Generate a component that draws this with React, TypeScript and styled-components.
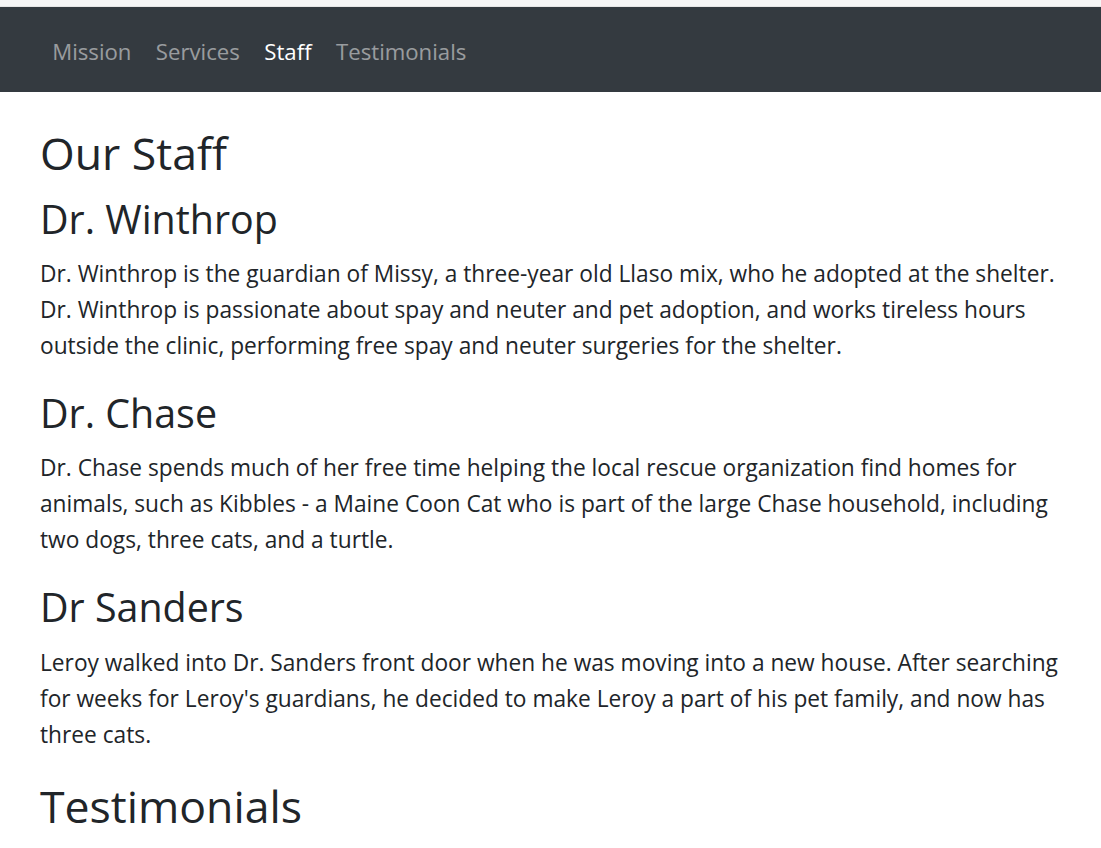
import React from "react";
import styled, { createGlobalStyle } from "styled-components";

const GlobalStyle = createGlobalStyle`
  html, body { margin: 0; padding: 0; background: #ffffff; }
  body {
    font-family: "Open Sans", "Noto Sans", Arial, sans-serif;
    color: #212529;
  }
  * { box-sizing: border-box; }
`;

const Page = styled.div`
  display: flex;
  flex-direction: column;
  width: 100%;
  min-height: 848px;
  overflow: hidden;
`;

const ChromeStrip = styled.div`
  height: 7px;
  background: #f6f6f6;
  border-bottom: 1px solid #e6e6e6;
`;

const NavBar = styled.nav`
  display: flex;
  align-items: center;
  height: 85px;
  padding: 4px 40px 0;
  background: #343a40;
`;

const NavList = styled.ul`
  display: flex;
  list-style: none;
  margin: 0;
  padding: 0;
`;

const NavLink = styled.a<{ $active?: boolean }>`
  display: block;
  padding: 0 12.2px;
  font-size: 22.2px;
  line-height: 36px;
  text-decoration: none;
  color: ${(p) => (p.$active ? "#ffffff" : "rgba(255, 255, 255, 0.5)")};
  cursor: pointer;
`;

const Content = styled.main`
  display: flex;
  flex-direction: column;
  padding: 32px 40px 0;
`;

const SectionTitle = styled.h2`
  margin: 0 0 12px;
  font-size: 44.6px;
  line-height: 57.6px;
  font-weight: 400;
`;

const StaffName = styled.h3`
  margin: 0 0 12px;
  font-size: 39.4px;
  line-height: 50.4px;
  font-weight: 400;
`;

const Bio = styled.p`
  margin: 0 0 24px;
  max-width: 1021px;
  font-size: 22.72px;
  line-height: 36px;
`;

const staff = [
  {
    name: "Dr. Winthrop",
    bio: "Dr. Winthrop is the guardian of Missy, a three-year old Llaso mix, who he adopted at the shelter. Dr. Winthrop is passionate about spay and neuter and pet adoption, and works tireless hours outside the clinic, performing free spay and neuter surgeries for the shelter.",
  },
  {
    name: "Dr. Chase",
    bio: "Dr. Chase spends much of her free time helping the local rescue organization find homes for animals, such as Kibbles - a Maine Coon Cat who is part of the large Chase household, including two dogs, three cats, and a turtle.",
  },
  {
    name: "Dr Sanders",
    bio: "Leroy walked into Dr. Sanders front door when he was moving into a new house. After searching for weeks for Leroy's guardians, he decided to make Leroy a part of his pet family, and now has three cats.",
  },
];

const links = ["Mission", "Services", "Staff", "Testimonials"];

export default function App() {
  return (
    <Page>
      <GlobalStyle />
      <ChromeStrip />
      <NavBar>
        <NavList>
          {links.map((l) => (
            <li key={l}>
              <NavLink $active={l === "Staff"}>{l}</NavLink>
            </li>
          ))}
        </NavList>
      </NavBar>
      <Content>
        <SectionTitle>Our Staff</SectionTitle>
        {staff.map((s) => (
          <React.Fragment key={s.name}>
            <StaffName>{s.name}</StaffName>
            <Bio>{s.bio}</Bio>
          </React.Fragment>
        ))}
        <SectionTitle>Testimonials</SectionTitle>
      </Content>
    </Page>
  );
}
